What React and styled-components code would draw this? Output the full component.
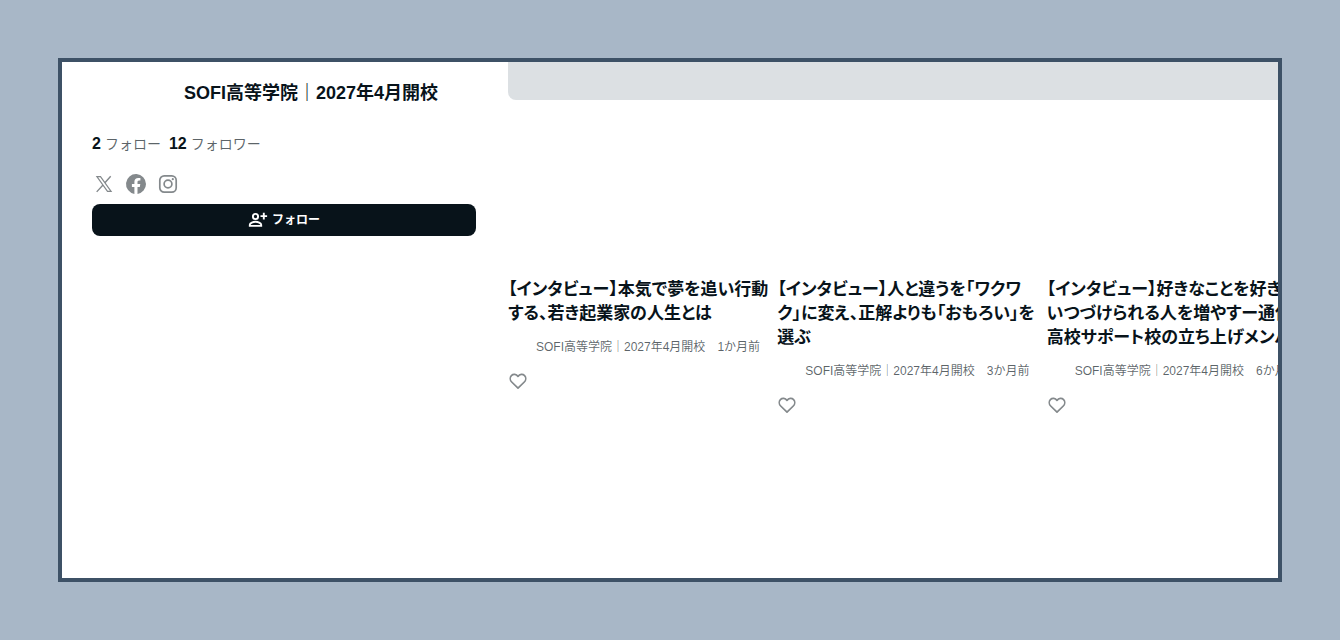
import React, { useState } from "react";
import styled, { createGlobalStyle } from "styled-components";

const GlobalStyle = createGlobalStyle`
  :root {
    --page-bg: #a8b7c7;
    --frame-color: #3d5166;
    --main-color: #08131a;
    --second-color: rgba(8, 19, 26, 0.66);
    --icon-color: #84898c;
    --main-font: "Liberation Sans", "Noto Sans CJK JP", sans-serif;
  }
  * {
    box-sizing: border-box;
    margin: 0;
    padding: 0;
  }
  body {
    background-color: var(--page-bg);
    color: var(--main-color);
    font-family: var(--main-font);
  }
`;

const Page = styled.div`
  display: flex;
  min-height: 100vh;
  padding: 58px;
`;

const Window = styled.div`
  flex: 1;
  min-width: 0;
  display: flex;
  gap: 32px;
  padding-left: 30px;
  overflow: hidden;
  background-color: #fff;
  border: 4px solid var(--frame-color);
`;

const Sidebar = styled.aside`
  flex: 0 0 384px;
  padding-top: 17px;
`;

const CreatorName = styled.h1`
  padding-left: 92px;
  font-size: 18px;
  line-height: 28px;
  font-weight: 600;
  white-space: nowrap;
`;

const Counts = styled.div`
  display: flex;
  gap: 8px;
  margin-top: 23px;
`;

const Count = styled.a`
  display: flex;
  align-items: center;
  gap: 4px;
  color: var(--second-color);
  font-size: 14px;
  line-height: 28px;
  text-decoration: none;
  strong {
    color: var(--main-color);
    font-size: 16px;
  }
`;

const Socials = styled.div`
  display: flex;
  gap: 8px;
  margin-top: 14px;
`;

const SocialLink = styled.a`
  display: flex;
  width: 24px;
  height: 24px;
  color: var(--icon-color);
`;

const FollowButton = styled.button`
  display: flex;
  align-items: center;
  justify-content: center;
  gap: 4px;
  width: 100%;
  height: 32px;
  margin-top: 8px;
  border: none;
  border-radius: 8px;
  background-color: var(--main-color);
  color: #fff;
  font-family: var(--main-font);
  font-size: 12px;
  font-weight: 600;
  cursor: pointer;
  span {
    padding-bottom: 3px;
  }
`;

const Main = styled.main`
  flex: 1 0 804px;
`;

const Banner = styled.div`
  height: 38px;
  border-radius: 0 0 8px 8px;
  background-color: #dce0e3;
`;

const Notes = styled.div`
  display: grid;
  grid-template-columns: repeat(3, 1fr);
  gap: 4px;
  align-items: start;
  margin-top: 178px;
`;

const NoteTitle = styled.h3`
  font-size: 17px;
  line-height: 24px;
  font-weight: 600;
  font-feature-settings: "palt";
  a {
    color: inherit;
    text-decoration: none;
  }
`;

const Meta = styled.div`
  display: flex;
  gap: 12px;
  margin-top: 11px;
  padding-left: 28px;
  color: var(--second-color);
  font-size: 12px;
  line-height: 20px;
  white-space: nowrap;
`;

const LikeButton = styled.button`
  display: flex;
  margin-top: 14px;
  border: none;
  background: none;
  color: var(--icon-color);
  cursor: pointer;
`;

const XIcon = () => (
  <svg width="24" height="24" viewBox="0 0 24 24" fill="none" stroke="currentColor">
    <path strokeWidth="1.2" d="M4.900 4.600H8.500L19.100 19.400H15.500z" />
    <path strokeWidth="1.4" d="M18.700 4.200 12.900 10.800M11 13 4.700 19.900" />
  </svg>
);

const FacebookIcon = () => (
  <svg width="24" height="24" viewBox="0 0 24 24" fill="currentColor">
    <path d="M22 12a10 10 0 1 0-11.6 9.9v-7H7.9V12h2.500V9.800c0-2.500 1.500-3.900 3.800-3.900 1.100 0 2.200.2 2.200.2v2.500h-1.300c-1.200 0-1.600.8-1.600 1.600V12h2.800l-.5 2.900h-2.300v7A10 10 0 0 0 22 12z" />
  </svg>
);

const InstagramIcon = () => (
  <svg width="24" height="24" viewBox="0 0 24 24" fill="none" stroke="currentColor" strokeWidth="1.7">
    <rect x="3.8" y="3.8" width="16.4" height="16.4" rx="4.4" />
    <circle cx="12" cy="12" r="3.9" />
    <circle cx="16.8" cy="7.2" r="1.1" fill="currentColor" stroke="none" />
  </svg>
);

const PersonAddIcon = () => (
  <svg width="20" height="20" viewBox="0 0 20 20" fill="none" stroke="currentColor" strokeWidth="1.9">
    <circle cx="7.5" cy="6.5" r="2.6" />
    <path d="M1.8 15.900v-1.200c0-1.900 3.400-2.900 5.700-2.900s5.700 1 5.700 2.900v1.200z" />
    <path d="M15.800 2.800v6.600M12.500 6.100h6.600" />
  </svg>
);

const HeartIcon = () => (
  <svg width="20" height="20" viewBox="0 0 20 20" fill="none" stroke="currentColor" strokeWidth="1.7">
    <path
      strokeLinejoin="round"
      d="M10 17.200 3.700 11C1.900 9.200 1.800 6.300 3.400 4.600 5.200 2.800 8.300 3 10 5.400 11.700 3 14.800 2.800 16.600 4.600 18.200 6.300 18.100 9.200 16.300 11z"
    />
  </svg>
);

const CREATOR = "SOFI高等学院｜2027年4月開校";

const notes = [
  {
    title: "【インタビュー】本気で夢を追い行動する、若き起業家の人生とは",
    date: "1か月前",
  },
  {
    title: "【インタビュー】人と違うを「ワクワク」に変え、正解よりも「おもろい」を選ぶ",
    date: "3か月前",
  },
  {
    title: "【インタビュー】好きなことを好きでいつづけられる人を増やすー通信制高校サポート校の立ち上げメンバー",
    date: "6か月前",
  },
];

const Note = ({ title, date }) => {
  const [liked, setLiked] = useState(false);

  return (
    <article>
      <NoteTitle>
        <a href="#note">{title}</a>
      </NoteTitle>
      <Meta>
        <span>{CREATOR}</span>
        <time>{date}</time>
      </Meta>
      <LikeButton type="button" aria-label="スキ" aria-pressed={liked} onClick={() => setLiked(!liked)}>
        <HeartIcon />
      </LikeButton>
    </article>
  );
};

const App = () => {
  return (
    <>
      <GlobalStyle />
      <Page>
        <Window>
          <Sidebar>
            <CreatorName>{CREATOR}</CreatorName>
            <Counts>
              <Count href="#followings">
                <strong>2</strong>フォロー
              </Count>
              <Count href="#followers">
                <strong>12</strong>フォロワー
              </Count>
            </Counts>
            <Socials>
              <SocialLink href="#x" aria-label="X">
                <XIcon />
              </SocialLink>
              <SocialLink href="#facebook" aria-label="Facebook">
                <FacebookIcon />
              </SocialLink>
              <SocialLink href="#instagram" aria-label="Instagram">
                <InstagramIcon />
              </SocialLink>
            </Socials>
            <FollowButton type="button">
              <PersonAddIcon />
              <span>フォロー</span>
            </FollowButton>
          </Sidebar>
          <Main>
            <Banner />
            <Notes>
              {notes.map((note) => (
                <Note key={note.date} {...note} />
              ))}
            </Notes>
          </Main>
        </Window>
      </Page>
    </>
  );
};

export default App;
